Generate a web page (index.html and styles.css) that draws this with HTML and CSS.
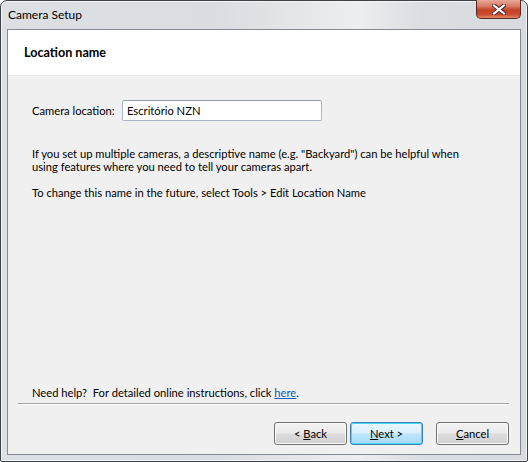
FILE: index.html
```html
<!DOCTYPE html>
<html>
<head>
<meta charset="utf-8">
<link rel="stylesheet" href="styles.css">
</head>
<body>
<div class="window">
  <div class="titlebar">
    <span class="title">Camera Setup</span>
    <div class="close">
      <svg width="14" height="11" viewBox="0 0 14 11">
        <path d="M2 1.5 L12 9.5 M12 1.5 L2 9.5" stroke="#4a2a24" stroke-width="4.2" stroke-linecap="square"/>
        <path d="M2 1.5 L12 9.5 M12 1.5 L2 9.5" stroke="#ffffff" stroke-width="2.2" stroke-linecap="square"/>
      </svg>
    </div>
  </div>
  <div class="client">
    <div class="header">Location name</div>
    <div class="body">
      <div class="content">
        <div class="field-row">
          <span class="label">Camera location:</span>
          <div class="input">Escritório NZN</div>
        </div>
        <p class="para">If you set up multiple cameras, a descriptive name (e.g. "Backyard") can be helpful when<br>using features where you need to tell your cameras apart.</p>
        <p class="para">To change this name in the future, select Tools &gt; Edit Location Name</p>
        <div class="spacer"></div>
        <p class="help">Need help?&nbsp; For detailed online instructions, click <a class="link">here</a>.</p>
      </div>
      <div class="separator"></div>
      <div class="buttons">
        <div class="btn"><span>&lt; <u>B</u>ack</span></div>
        <div class="btn default"><span><u>N</u>ext &gt;</span></div>
        <div class="btn cancel"><span><u>C</u>ancel</span></div>
      </div>
    </div>
  </div>
</div>
</body>
</html>
```
FILE: styles.css
```css
html, body {
  margin: 0;
  padding: 0;
  background: #ffffff;
}
body {
  font-family: Lato, "Noto Sans", sans-serif;
  font-size: 11.2px;
  color: #000;
}
.window {
  box-sizing: border-box;
  width: 528px;
  height: 462px;
  border: 1px solid #3c4148;
  border-radius: 7px 7px 2px 2px;
  background: linear-gradient(90deg, #dcdfe3 0%, #d9dce0 40%, #eceef0 68%, #dadde1 80%, #d7dade 100%);
  display: flex;
  flex-direction: column;
  position: relative;
  box-shadow: inset 0 0 0 1px #f4f5f6;
}
.titlebar {
  height: 28px;
  display: flex;
  align-items: center;
  padding-left: 7px;
}
.title {
  font-size: 12px;
  color: #000;
  margin-top: -2px;
}
.close {
  position: absolute;
  top: -1px;
  right: 6px;
  width: 45px;
  height: 19px;
  box-sizing: border-box;
  border: 1px solid #5a2a22;
  border-top: none;
  border-radius: 0 0 5px 5px;
  background: linear-gradient(180deg, #e9a898 0%, #d97a64 35%, #c4412a 55%, #cc4a30 80%, #e08a6a 100%);
  display: flex;
  align-items: center;
  justify-content: center;
}
.client {
  flex: 1;
  margin: 0 6px 6px 6px;
  border: 1px solid #858b93;
  background: #f0f0f0;
  display: flex;
  flex-direction: column;
}
.header {
  background: #ffffff;
  height: 46px;
  box-sizing: border-box;
  padding-left: 16px;
  display: flex;
  align-items: center;
  font-weight: bold;
  font-size: 12.6px;
  border-bottom: 1px solid #eaeaea;
}
.body {
  flex: 1;
  display: flex;
  flex-direction: column;
}
.content {
  flex: 1;
  display: flex;
  flex-direction: column;
  padding: 24px 24px 0 24px;
  white-space: nowrap;
}
.field-row {
  display: flex;
  align-items: center;
}
.label {
  width: 90px;
  flex: none;
}
.input {
  box-sizing: border-box;
  width: 200px;
  height: 21px;
  border: 1px solid #a9b6c8;
  border-top-color: #8e9fb4;
  border-radius: 2px;
  background: #ffffff;
  padding-left: 4px;
  display: flex;
  align-items: center;
}
.para {
  margin: 0;
  line-height: 13px;
}
.field-row + .para {
  margin-top: 26px;
}
.para + .para {
  margin-top: 13px;
}
.spacer {
  flex: 1;
}
.help {
  margin: 0 0 4px 0;
  line-height: 13px;
}
.link {
  color: #0a58b8;
  text-decoration: underline;
}
.separator {
  height: 1px;
  background: #a0a0a0;
  margin: 0 11px 0 10px;
  border-bottom: 1px solid #ffffff;
}
.buttons {
  display: flex;
  justify-content: flex-end;
  padding: 17px 11px 9px 0;
  gap: 3px;
}
.btn {
  box-sizing: border-box;
  width: 73px;
  height: 23px;
  border: 1px solid #707070;
  border-radius: 3px;
  background: linear-gradient(180deg, #f2f2f2 0%, #ebebeb 48%, #dddddd 52%, #cfcfcf 100%);
  box-shadow: inset 0 0 0 1px #fbfbfb;
  display: flex;
  align-items: center;
  justify-content: center;
}
.btn.default {
  border-color: #3c7fb1;
  background: linear-gradient(180deg, #eaf6fd 0%, #d9f0fc 48%, #bee6fd 52%, #a7d9f5 100%);
  box-shadow: inset 0 0 0 1px #48d8fb;
}
.btn.cancel {
  margin-left: 10px;
}
.btn u {
  text-decoration: underline;
}
```
